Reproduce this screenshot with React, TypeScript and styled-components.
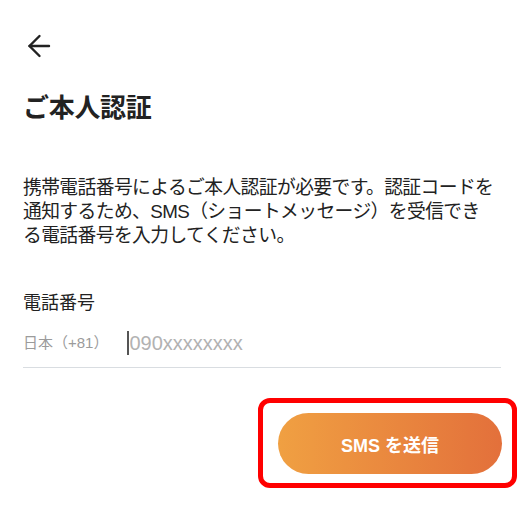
import * as React from 'react';
import styled, { createGlobalStyle } from 'styled-components';

const GlobalStyle = createGlobalStyle`
  html, body {
    margin: 0;
    padding: 0;
    background: #ffffff;
  }
  body {
    font-family: "Liberation Sans", "Noto Sans CJK JP", sans-serif;
    color: #222222;
  }
`;

const Page = styled.div`
  width: 524px;
  height: 508px;
  box-sizing: border-box;
  padding: 34px 23px 0;
  overflow: hidden;
`;

const BackButton = styled.button`
  display: block;
  width: 24px;
  height: 24px;
  margin-left: 4px;
  padding: 0;
  border: none;
  background: none;
  color: #222222;
  cursor: pointer;
`;

const Title = styled.h1`
  margin: 32px 0 0;
  font-size: 26px;
  line-height: 36px;
  font-weight: 700;
  letter-spacing: -0.3px;
`;

const Lead = styled.p`
  margin: 50px 0 0;
  font-size: 18.8px;
  line-height: 24px;
  letter-spacing: -0.6px;
`;

const Label = styled.div`
  margin-top: 42px;
  font-size: 18px;
  line-height: 26px;
`;

const PhoneRow = styled.div`
  display: flex;
  align-items: center;
  margin-top: 4px;
  padding: 10px 0 11px;
  border-bottom: 1px solid #d9dde1;
`;

const Prefix = styled.span`
  font-size: 15px;
  line-height: 26px;
  color: #9b9b9b;
  white-space: nowrap;
`;

const Caret = styled.span`
  display: block;
  width: 2px;
  height: 24px;
  margin-left: 19px;
  background: #555555;
`;

const PhoneInput = styled.input`
  flex: 1;
  min-width: 0;
  border: none;
  outline: none;
  padding: 0;
  margin: 0;
  background: transparent;
  font-family: "Liberation Sans", "Noto Sans CJK JP", sans-serif;
  font-size: 20px;
  line-height: 26px;
  color: #222222;
  &::placeholder {
    color: #b2b2b2;
  }
`;

const Actions = styled.div`
  display: flex;
  justify-content: flex-end;
  margin-top: 30px;
  margin-right: -16px;
`;

const Highlight = styled.div`
  border: 5px solid #ff0000;
  border-radius: 12px;
  padding: 10px 10px 9px 15px;
`;

const SendButton = styled.button`
  display: block;
  width: 224px;
  height: 61px;
  border: none;
  border-radius: 31px;
  background: linear-gradient(90deg, #f0a042 0%, #e3703b 100%);
  color: #ffffff;
  font-family: "Liberation Sans", "Noto Sans CJK JP", sans-serif;
  font-size: 18px;
  font-weight: 700;
  cursor: pointer;
`;

export default function App() {
  return (
    <>
      <GlobalStyle />
      <Page>
        <BackButton aria-label="戻る">
          <svg width="24" height="24" viewBox="0 0 24 24" fill="none" stroke="currentColor" strokeWidth="2.4" strokeLinecap="round" strokeLinejoin="round">
            <path d="M22 12H2.5" />
            <path d="M12.5 2L2.5 12l10 10" />
          </svg>
        </BackButton>
        <Title>ご本人認証</Title>
        <Lead>
          携帯電話番号によるご本人認証が必要です。認証コードを
          <br />
          通知するため、SMS（ショートメッセージ）を受信でき
          <br />
          る電話番号を入力してください。
        </Lead>
        <Label>電話番号</Label>
        <PhoneRow>
          <Prefix>日本（+81）</Prefix>
          <Caret />
          <PhoneInput type="tel" placeholder="090xxxxxxxx" />
        </PhoneRow>
        <Actions>
          <Highlight>
            <SendButton>SMS を送信</SendButton>
          </Highlight>
        </Actions>
      </Page>
    </>
  );
}
